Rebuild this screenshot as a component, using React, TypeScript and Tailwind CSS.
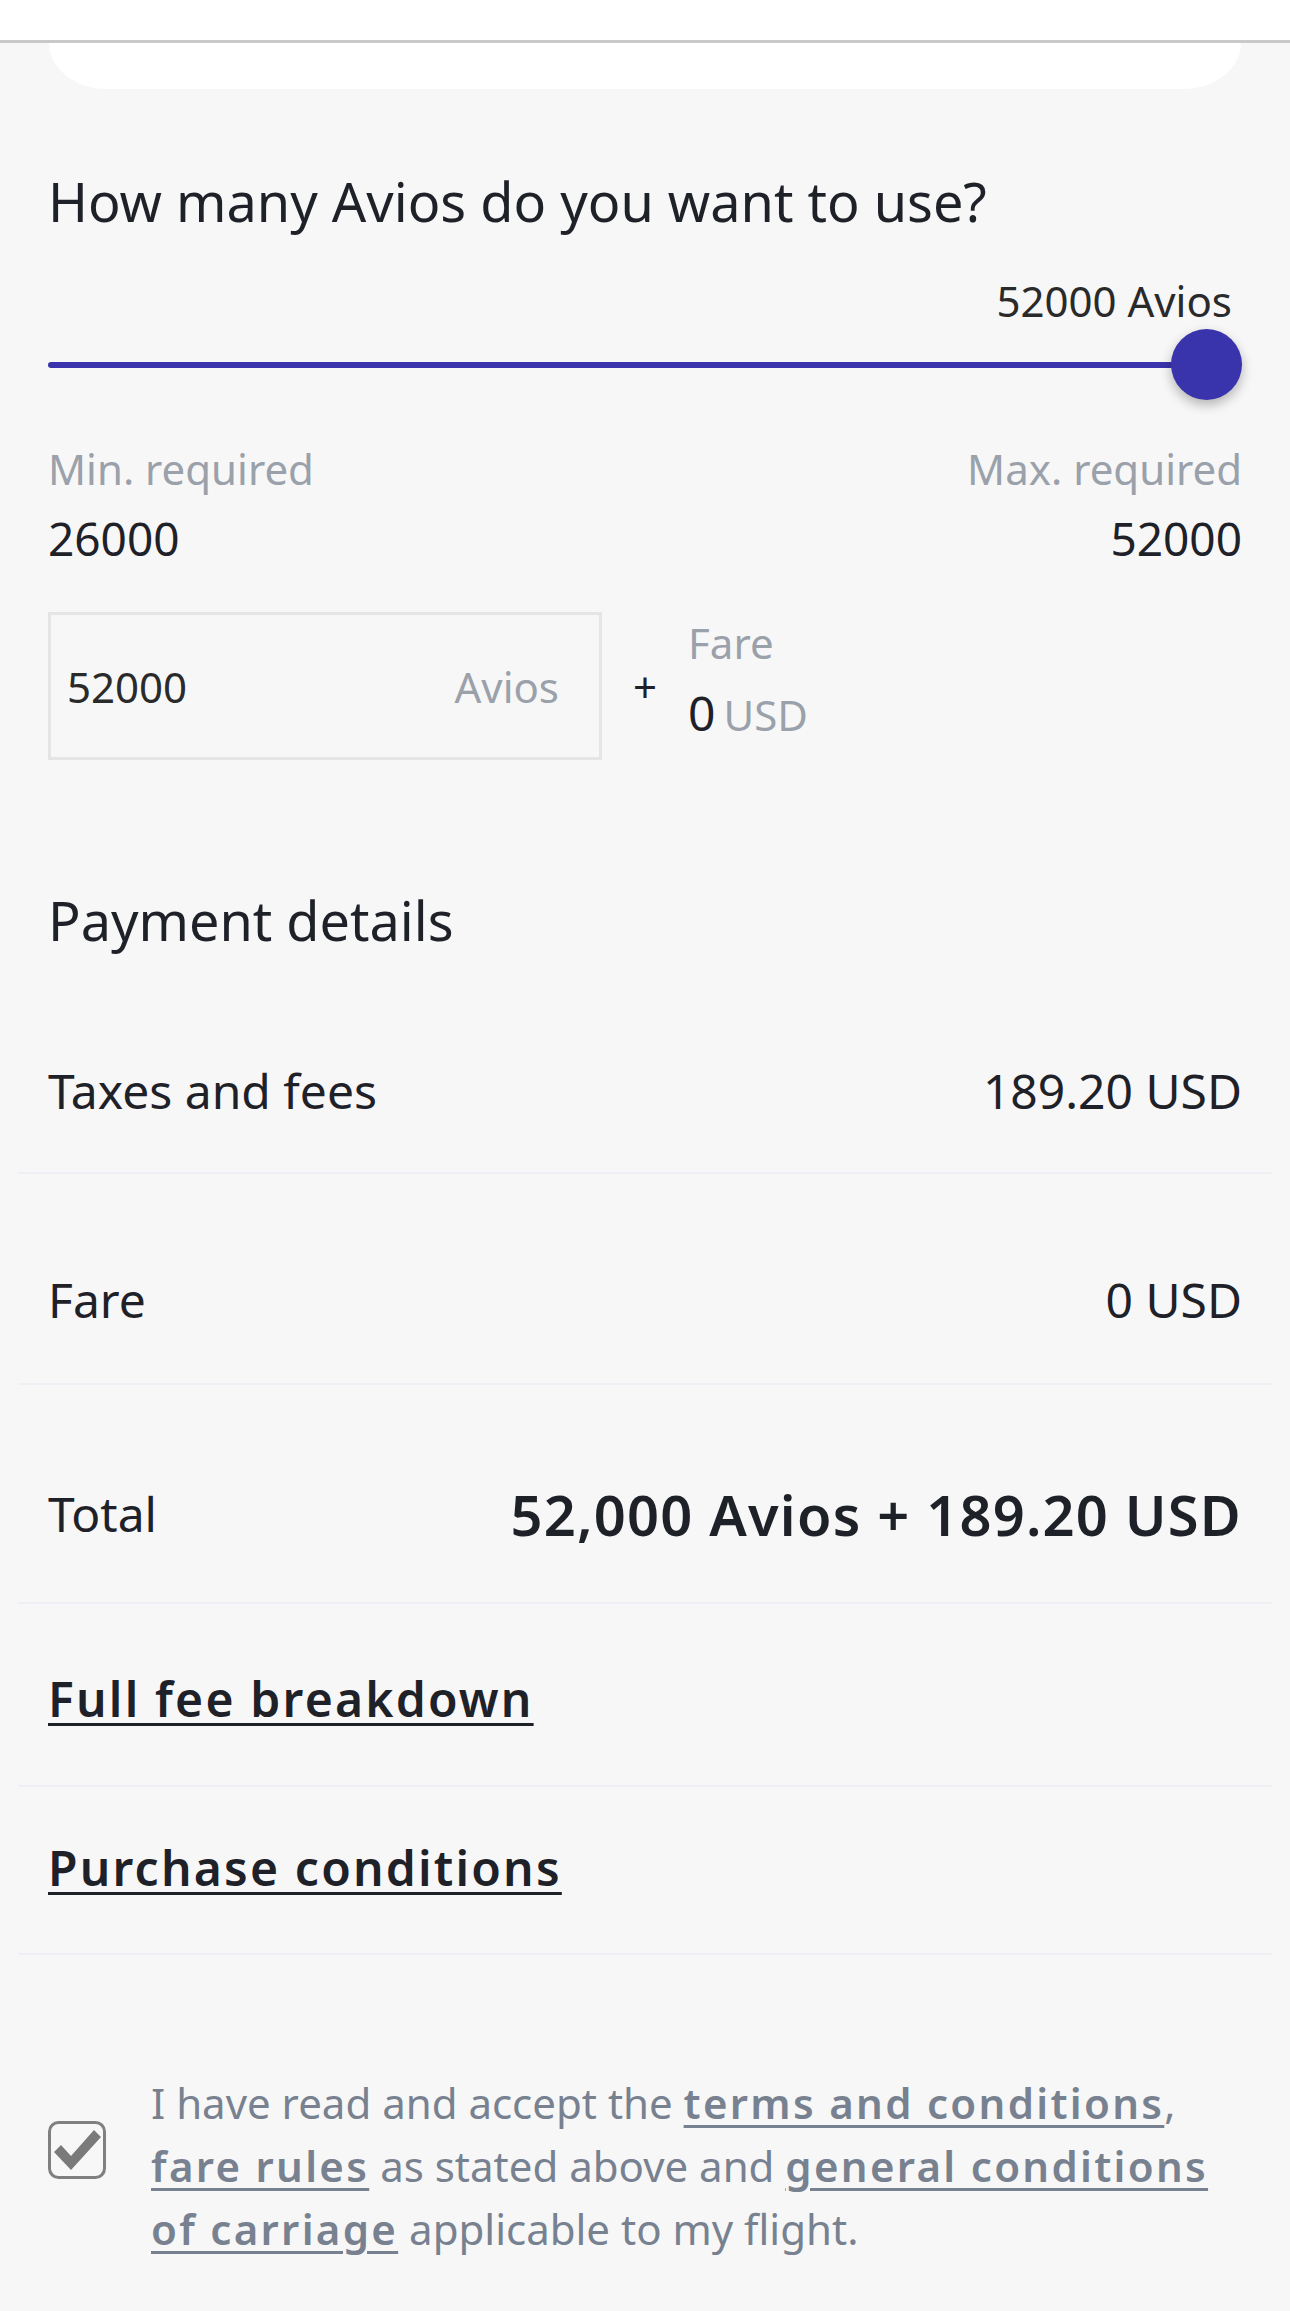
import React from "react";

function CheckIcon() {
  return (
    <svg width="58" height="58" viewBox="0 0 58 58" className="block">
      <rect x="1.5" y="1.5" width="55" height="55" rx="9" fill="none" stroke="#808080" strokeWidth="3" />
      <path d="M6 31 L13 24 L23 35 L46 9 L53 16 L23 49 Z" fill="#7a7a7a" />
    </svg>
  );
}

export default function App() {
  return (
    <div className="min-h-screen bg-[#f7f7f7] font-['Noto_Sans',sans-serif] text-[#1f2129]">
      <div className="h-[43px] bg-white border-b-[3px] border-[#c9c9c9]" />
      <div className="mx-[49px] h-[46px] bg-white rounded-bl-[58px_46px] rounded-br-[58px_46px]" />

      <div className="px-[48px]">
        <h2 className="mt-[75px] text-[54px] leading-[74px] font-normal">How many Avios do you want to use?</h2>
        <div className="mt-[34px] pr-[10px] text-right text-[42px] leading-[57px] text-[#2a2a2a]">52000 Avios</div>
        <div className="flex h-[71px] items-center">
          <div className="h-[6px] flex-1 rounded-full bg-[#3934ab]" />
          <div className="-ml-[4px] h-[71px] w-[71px] rounded-full bg-[#3934ab] shadow-[0_5px_12px_rgba(0,0,0,0.28)]" />
        </div>

        <div className="mt-[40px] flex justify-between">
          <div>
            <div className="text-[42px] leading-[57px] text-[#9aa1aa]">Min. required</div>
            <div className="mt-[9px] text-[46px] leading-[65px]">26000</div>
          </div>
          <div className="text-right">
            <div className="text-[42px] leading-[57px] text-[#9aa1aa]">Max. required</div>
            <div className="mt-[9px] text-[46px] leading-[65px]">52000</div>
          </div>
        </div>

        <div className="mt-[41px] flex items-center">
          <div className="flex h-[148px] w-[554px] items-center justify-between border-[3px] border-[#e5e5e5] pl-[16px] pr-[40px]">
            <span className="text-[42px] leading-[57px] text-[#2a2a2a]">52000</span>
            <span className="text-[42px] leading-[57px] text-[#9aa1aa]">Avios</span>
          </div>
          <span className="ml-[31px] text-[42px] leading-[57px]">+</span>
          <div className="ml-[31px] flex flex-col">
            <span className="text-[42px] leading-[57px] text-[#9aa1aa]">Fare</span>
            <div className="mt-[9px] leading-[65px]">
              <span className="text-[48px]">0</span>
              <span className="ml-[8px] text-[42px] text-[#9aa1aa]">USD</span>
            </div>
          </div>
        </div>

        <h2 className="mt-[123px] text-[54px] leading-[74px] font-normal">Payment details</h2>
      </div>

      <div className="mx-[18px] border-b-2 border-[#eef0f5] px-[30px] pt-[98px] pb-[45px]">
        <div className="flex items-center justify-between text-[48px] leading-[72px]">
          <span>Taxes and fees</span>
          <span>189.20 USD</span>
        </div>
      </div>
      <div className="mx-[18px] border-b-2 border-[#eef0f5] px-[30px] pt-[90px] pb-[47px]">
        <div className="flex items-center justify-between text-[48px] leading-[72px]">
          <span>Fare</span>
          <span>0 USD</span>
        </div>
      </div>
      <div className="mx-[18px] border-b-2 border-[#eef0f5] px-[30px] pt-[92px] pb-[51px]">
        <div className="flex items-center justify-between">
          <span className="text-[48px] leading-[72px]">Total</span>
          <span className="text-[56px] leading-[74px] font-semibold tracking-[1.2px]">52,000 Avios + 189.20 USD</span>
        </div>
      </div>
      <div className="mx-[18px] border-b-2 border-[#eef0f5] px-[30px] pt-[59px] pb-[50px]">
        <a className="text-[48px] leading-[72px] font-semibold tracking-[2.2px] underline decoration-[3px] underline-offset-[6px]">Full fee breakdown</a>
      </div>
      <div className="mx-[18px] border-b-2 border-[#eef0f5] px-[30px] pt-[45px] pb-[49px]">
        <a className="text-[48px] leading-[72px] font-semibold tracking-[2.2px] underline decoration-[3px] underline-offset-[6px]">Purchase conditions</a>
      </div>

      <div className="flex items-start px-[48px] pt-[116px] pb-[40px]">
        <div className="mt-[50px] shrink-0">
          <CheckIcon />
        </div>
        <p className="ml-[45px] text-[42px] leading-[63px] text-[#788190]">
          I have read and accept the{" "}
          <a className="font-semibold tracking-[2.3px] underline decoration-[3px] underline-offset-[6px]">terms and conditions</a>,{" "}
          <a className="font-semibold tracking-[2.3px] underline decoration-[3px] underline-offset-[6px]">fare rules</a> as stated above and{" "}
          <a className="font-semibold tracking-[2.3px] underline decoration-[3px] underline-offset-[6px]">general conditions of carriage</a>{" "}
          applicable to my flight.
        </p>
      </div>
    </div>
  );
}
